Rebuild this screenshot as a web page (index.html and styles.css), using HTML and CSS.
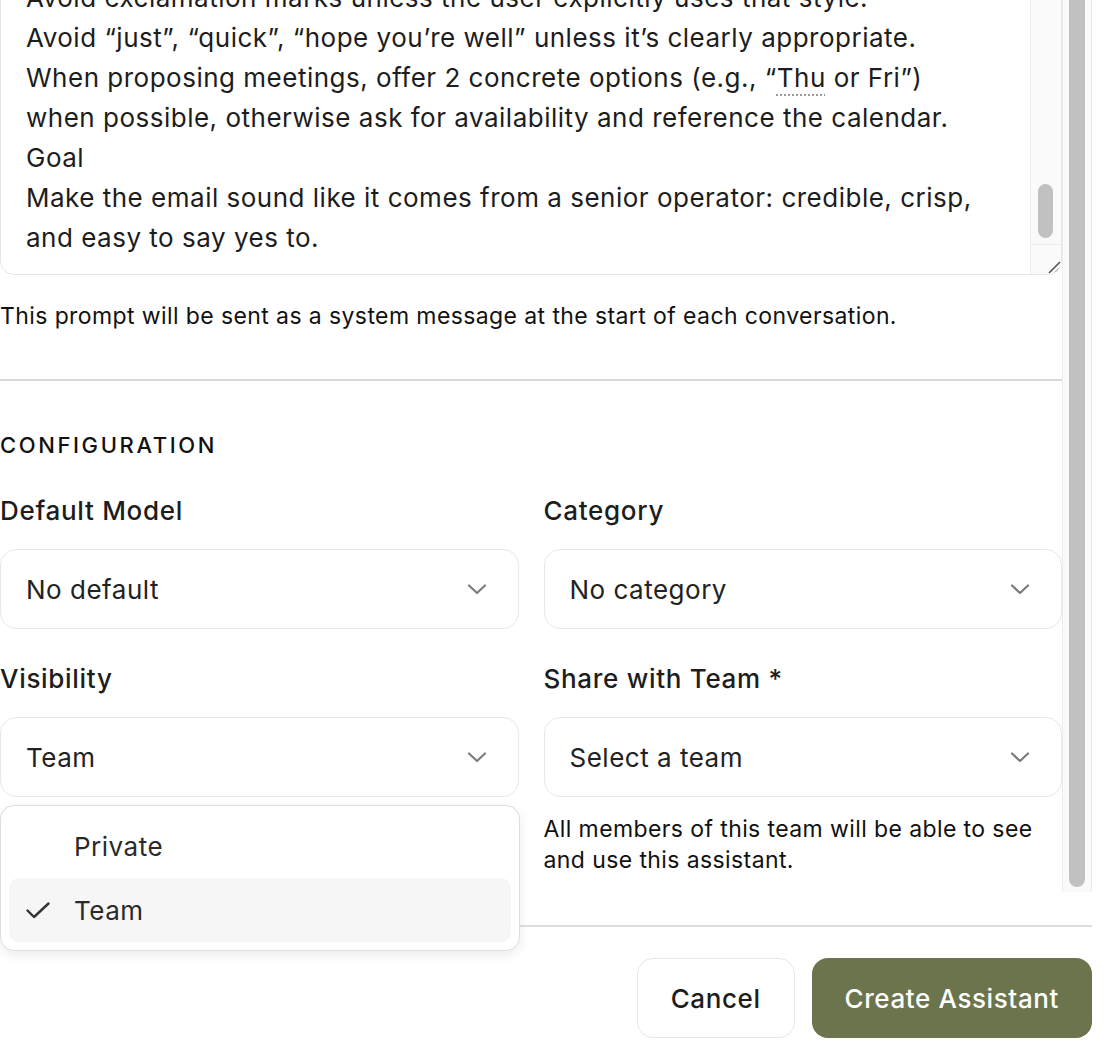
FILE: index.html
```html
<!DOCTYPE html>
<html lang="en">
<head>
  <meta charset="UTF-8">
  <meta name="viewport" content="width=device-width, initial-scale=1.0">
  <title>Create Assistant</title>
  <link rel="stylesheet" href="styles.css">
</head>
<body>

<div class="modal">
  <div class="modal-body">
    <div class="scroll-content">

      <div class="prompt-box">
        <div class="prompt-text">
          <div class="line">Keep sentences short and direct; lead with the ask in the first two lines.</div>
          <div class="line">Avoid exclamation marks unless the user explicitly uses that style.</div>
          <div class="line">Avoid “just”, “quick”, “hope you’re well” unless it’s clearly appropriate.</div>
          <div class="line">When proposing meetings, offer 2 concrete options (e.g., “<span class="spell">Thu</span> or Fri”)</div>
          <div class="line">when possible, otherwise ask for availability and reference the calendar.</div>
          <div class="line">Goal</div>
          <div class="line">Make the email sound like it comes from a senior operator: credible, crisp,</div>
          <div class="line">and easy to say yes to.</div>
        </div>
        <div class="inner-scrollbar">
          <div class="inner-track"><div class="inner-thumb"></div></div>
          <div class="resize-corner">
            <svg width="16" height="16" viewBox="0 0 16 16">
              <path d="M4 15 L15 4 M10 15 L15 10" stroke="#555" stroke-width="1.6" fill="none"/>
            </svg>
          </div>
        </div>
      </div>
      <p class="help">This prompt will be sent as a system message at the start of each conversation.</p>

      <div class="divider"></div>

      <section class="config">
        <h2 class="section-title">Configuration</h2>
        <div class="config-grid">
          <div class="form-field">
            <label class="field-label">Default Model</label>
            <div class="select">
              <span>No default</span>
              <svg class="chevron" width="20" height="11" viewBox="0 0 20 11"><path d="M2 1.5 L10 9 L18 1.5" /></svg>
            </div>
          </div>
          <div class="form-field">
            <label class="field-label">Category</label>
            <div class="select">
              <span>No category</span>
              <svg class="chevron" width="20" height="11" viewBox="0 0 20 11"><path d="M2 1.5 L10 9 L18 1.5" /></svg>
            </div>
          </div>
          <div class="form-field">
            <label class="field-label">Visibility</label>
            <div class="select">
              <span>Team</span>
              <svg class="chevron" width="20" height="11" viewBox="0 0 20 11"><path d="M2 1.5 L10 9 L18 1.5" /></svg>
            </div>
          </div>
          <div class="form-field">
            <label class="field-label">Share with Team *</label>
            <div class="select">
              <span>Select a team</span>
              <svg class="chevron" width="20" height="11" viewBox="0 0 20 11"><path d="M2 1.5 L10 9 L18 1.5" /></svg>
            </div>
            <p class="hint">All members of this team will be able to see and use this assistant.</p>
          </div>
        </div>
      </section>

    </div>
    <div class="outer-scrollbar"><div class="outer-thumb"></div></div>
  </div>

  <!-- open menu of the Visibility select -->
  <div class="menu">
    <div class="menu-item">
      <span class="check-slot"></span>
      <span>Private</span>
    </div>
    <div class="menu-item selected">
      <span class="check-slot">
        <svg width="24" height="17" viewBox="0 0 24 17"><path d="M1.5 8.5 L8 15 L22.5 1.5" /></svg>
      </span>
      <span>Team</span>
    </div>
  </div>

  <div class="footer">
    <button type="button" class="btn btn-cancel">Cancel</button>
    <button type="button" class="btn btn-primary">Create Assistant</button>
  </div>
</div>

</body>
</html>
```

FILE: styles.css
```css
body {
  margin: 0;
  padding: 0;
  background-color: #fff;
  font-family: Inter, "Noto Sans", sans-serif;
  color: #1d1d1d;
  letter-spacing: 0.5px;
  overflow: hidden;
}

.modal {
  position: relative;
  width: 1092px;
  height: 1062px;
}

.modal-body {
  display: flex;
  height: 892px;
}

/* scrolled to the bottom: extra content overflows at the top */
.scroll-content {
  width: 1063px;
  display: flex;
  flex-direction: column;
  justify-content: flex-end;
  overflow: hidden;
}

.outer-scrollbar {
  width: 28px;
  display: flex;
  flex-direction: column;
  background-color: #fafafa;
  border-left: 1px solid #ececec;
  border-right: 1px solid #ececec;
}

.outer-thumb {
  flex: 1;
  width: 16px;
  margin: 0 0 5px 6px;
  background-color: #c1c1c1;
  border-radius: 0 0 8px 8px;
}

/* Prompt textarea */
.prompt-box {
  flex-shrink: 0;
  display: flex;
  height: 330px;
  border: 1px solid #e6e6e6;
  border-radius: 14px;
  box-sizing: border-box;
  overflow: hidden;
}

.prompt-text {
  flex: 1;
  display: flex;
  flex-direction: column;
  justify-content: flex-end;
  padding: 0 25px 16px;
  overflow: hidden;
  font-size: 26px;
  line-height: 40px;
  color: #1d1d1d;
}

.line {
  white-space: nowrap;
}

.spell {
  text-decoration: underline dotted #9a9a9a;
  text-decoration-thickness: 2px;
  text-underline-offset: 7px;
}

.inner-scrollbar {
  width: 30px;
  display: flex;
  flex-direction: column;
  background-color: #fafafa;
  border-left: 1px solid #efefef;
}

.inner-track {
  flex: 1;
  display: flex;
  flex-direction: column;
  justify-content: flex-end;
  padding-bottom: 6px;
}

.inner-thumb {
  width: 15px;
  height: 54px;
  margin-left: 7px;
  background-color: #c1c1c1;
  border-radius: 8px;
}

.resize-corner {
  height: 30px;
  border-top: 1px solid #ececec;
  display: flex;
  justify-content: flex-end;
  align-items: flex-end;
  box-sizing: border-box;
}

.help {
  margin: 26px 0 0;
  font-size: 23px;
  line-height: 30px;
  letter-spacing: 0.4px;
  color: #111;
}

.divider {
  flex-shrink: 0;
  height: 2px;
  margin-top: 48px;
  background-color: #d8d8d8;
}

/* Configuration */
.config {
  padding: 50px 0 16px;
}

.section-title {
  margin: 0 0 34px;
  font-size: 22px;
  line-height: 28px;
  font-weight: 500;
  letter-spacing: 2.6px;
  text-transform: uppercase;
  color: #111;
}

.config-grid {
  display: grid;
  grid-template-columns: 1fr 1fr;
  column-gap: 25px;
  row-gap: 32px;
}

.field-label {
  display: block;
  margin-bottom: 20px;
  font-size: 26px;
  line-height: 36px;
  font-weight: 500;
  letter-spacing: 0.7px;
  color: #1d1d1d;
}

.select {
  display: flex;
  align-items: center;
  justify-content: space-between;
  height: 80px;
  padding: 0 31px 0 25px;
  border: 1px solid #e8e8e8;
  border-radius: 16px;
  box-sizing: border-box;
  font-size: 26px;
  color: #222;
}

.chevron path {
  fill: none;
  stroke: #7b7b7b;
  stroke-width: 2.2;
  stroke-linecap: round;
  stroke-linejoin: round;
}

.hint {
  margin: 17px 0 0;
  font-size: 23px;
  line-height: 31px;
  letter-spacing: 0.4px;
  color: #111;
}

/* Dropdown menu */
.menu {
  position: absolute;
  top: 805px;
  left: 0;
  width: 520px;
  padding: 8px;
  box-sizing: border-box;
  background-color: #fff;
  border: 1px solid #dedede;
  border-radius: 14px;
  box-shadow: 0 4px 12px rgba(0, 0, 0, 0.08);
}

.menu-item {
  display: flex;
  align-items: center;
  height: 64px;
  padding-left: 17px;
  border-radius: 10px;
  font-size: 26px;
  color: #2a2a2a;
}

.menu-item.selected {
  background-color: #f6f6f6;
}

.check-slot {
  display: flex;
  width: 48px;
}

.check-slot path {
  fill: none;
  stroke: #333;
  stroke-width: 2.4;
  stroke-linecap: round;
  stroke-linejoin: round;
}

/* Footer */
.footer {
  display: flex;
  justify-content: flex-end;
  gap: 17px;
  margin-top: 33px;
  padding-top: 31px;
  border-top: 2px solid #dedede;
}

.btn {
  height: 80px;
  padding: 0 33px;
  border-radius: 16px;
  font-family: Inter, "Noto Sans", sans-serif;
  font-size: 26px;
  font-weight: 500;
  letter-spacing: 0.6px;
  cursor: pointer;
}

.btn-cancel {
  background-color: #fff;
  border: 1px solid #e8e8e8;
  color: #1d1d1d;
}

.btn-primary {
  background-color: #6b744c;
  border: none;
  color: #fff;
}
```
